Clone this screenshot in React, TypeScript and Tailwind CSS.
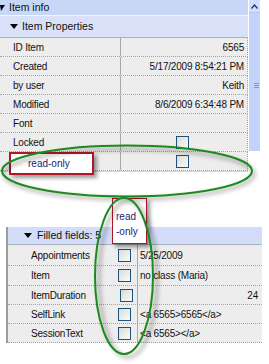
import React from 'react';

const font = { fontFamily: '"Liberation Sans", Arial, sans-serif' };

function Check({ className = '' }: { className?: string }) {
  return (
    <span
      className={`block w-[13px] h-[13px] border border-[#1c5180] bg-gradient-to-br from-[#dcdcd6] to-[#fafaf8] ${className}`}
    />
  );
}

function Tri({ className = '' }: { className?: string }) {
  return (
    <svg width="8" height="5" viewBox="0 0 8 5" className={className}>
      <path d="M0 0 L8 0 L4 5 Z" fill="#000" />
    </svg>
  );
}

const props: { label: string; value?: string; check?: boolean }[] = [
  { label: 'ID Item', value: '6565' },
  { label: 'Created', value: '5/17/2009 8:54:21 PM' },
  { label: 'by user', value: 'Keith' },
  { label: 'Modified', value: '8/6/2009 6:34:48 PM' },
  { label: 'Font' },
  { label: 'Locked', check: true },
];

const filled: { label: string; value: string; right?: boolean; h: string; mr: string }[] = [
  { label: 'Appointments', value: '5/25/2009', h: 'h-[21px]', mr: 'mr-[6px]' },
  { label: 'Item', value: 'no class (Maria)', h: 'h-[20px]', mr: 'mr-[6px]' },
  { label: 'ItemDuration', value: '24', right: true, h: 'h-[19px]', mr: 'mr-[4px]' },
  { label: 'SelfLink', value: '<a 6565>6565</a>', h: 'h-[19px]', mr: 'mr-[6px]' },
  { label: 'SessionText', value: '<a 6565></a>', h: 'h-[19px]', mr: 'mr-[6px]' },
];

export default function App() {
  return (
    <div className="relative w-[269px] h-[364px] overflow-hidden bg-white text-[#111]" style={font}>
      {/* item info panel */}
      <div className="flex">
        <div className="w-[248px]">
          <div className="h-[16px] flex items-center bg-[#c7d7f6] border-b border-[#f4f6fc] text-[10.5px]">
            <svg width="5" height="6" viewBox="0 0 5 6" className="ml-0 mr-[4px]">
              <path d="M0 0 L5 0 L1 6 Z" fill="#000" />
            </svg>
            Item info
          </div>
          <div className="h-[22px] flex items-center bg-[#d9e1f8] border-b border-[#a9b0bf] text-[10.5px]">
            <Tri className="ml-[10px] mr-[4px]" />
            Item Properties
          </div>
          {props.map((p) => (
            <div
              key={p.label}
              className="h-[19px] flex bg-[#ededed] border-b border-r border-dotted border-[#a4a4a4] text-[10px] tracking-[-0.2px]"
            >
              <div className="w-[121px] shrink-0 flex items-center pl-[13px] border-r border-solid border-r-[#a8a8a8]">
                {p.label}
              </div>
              <div className="flex-1 flex items-center justify-end pr-[3px]">
                {p.check ? <Check className="mr-[55px]" /> : p.value}
              </div>
            </div>
          ))}
        </div>
        <div className="w-[1px]" />
        <div className="w-[11px] h-[151px] bg-[#c3d3fb] flex flex-col items-center">
          <div className="w-full h-[13px] bg-[#d2defc] border-b border-[#b5c6ef] flex items-center justify-center">
            <svg width="7" height="5" viewBox="0 0 7 5">
              <path d="M0.5 4.5 L3.5 1 L6.5 4.5" stroke="#1d3b7a" strokeWidth="1.4" fill="none" />
            </svg>
          </div>
          <div className="mt-[70px] ml-[4px] flex flex-col gap-[1px]">
            <span className="block w-[5px] h-[1px] bg-[#7d98d6]" />
            <span className="block w-[5px] h-[1px] bg-[#7d98d6]" />
            <span className="block w-[5px] h-[1px] bg-[#7d98d6]" />
          </div>
        </div>
      </div>

      {/* read-only row */}
      <div className="w-[248px] h-[19px] flex bg-[#ededed] border-b border-r border-dotted border-[#a4a4a4] text-[10px]">
        <div className="w-[121px] shrink-0 border-r border-solid border-r-[#a8a8a8]" />
        <div className="flex-1 flex items-center">
          <Check className="ml-[55px]" />
        </div>
      </div>
      <div className="w-[248px] h-[1px] bg-[#c9d6f2]" />

      {/* filled fields panel */}
      <div className="mt-[55px] ml-[6px] w-[256px] border-l-2 border-[#9c9c9c] text-[10px] tracking-[-0.2px]">
        <div className="h-[18px] flex items-center bg-[#d3dcf8] border-b border-[#a9b0bf] text-[10.5px] tracking-normal">
          <Tri className="ml-[16px] mr-[5px]" />
          Filled fields: 5
        </div>
        {filled.map((f) => (
          <div key={f.label} className={`${f.h} flex bg-[#ededed] border-b border-dotted border-[#a4a4a4]`}>
            <div className="w-[130px] shrink-0 flex items-center pl-[23px] border-r border-solid border-r-[#a8a8a8]">
              <span className="flex-1">{f.label}</span>
              <Check className={f.mr} />
            </div>
            <div className={`flex-1 flex items-center ${f.right ? 'justify-end pr-[4px]' : 'pl-[2px]'}`}>
              {f.value}
            </div>
          </div>
        ))}
      </div>

      {/* annotations */}
      <div className="absolute left-[9px] top-[152px] w-[85px] h-[23px] bg-white border-2 border-[#b01828] shadow-[3px_3px_4px_rgba(0,0,0,0.4)] flex items-center pl-[17px] text-[10px] text-[#22226e]">
        read-only
      </div>
      <div className="absolute left-[112px] top-[198px] w-[35px] h-[46px] bg-white border-[1.5px] border-[#a8182a] shadow-[3px_3px_4px_rgba(0,0,0,0.4)] pl-[3px] pt-[10px] text-[10px] leading-[15px] text-[#22226e]">
        read
        <br />
        -only
      </div>
      <svg className="absolute left-0 top-0 pointer-events-none" width="269" height="364" viewBox="0 0 269 364">
        <defs>
          <filter id="sh" x="-20%" y="-20%" width="140%" height="140%">
            <feGaussianBlur stdDeviation="2" />
          </filter>
        </defs>
        <ellipse cx="129" cy="174" rx="125" ry="25" fill="none" stroke="#000" strokeOpacity="0.3" strokeWidth="3" filter="url(#sh)" />
        <ellipse cx="127" cy="171" rx="125" ry="25.5" fill="none" stroke="#1c8a1c" strokeWidth="2" />
        <ellipse cx="128" cy="279" rx="29" ry="78" fill="none" stroke="#000" strokeOpacity="0.3" strokeWidth="3" filter="url(#sh)" />
        <ellipse cx="124" cy="276" rx="29" ry="78" fill="none" stroke="#1c8a1c" strokeWidth="2" />
      </svg>
    </div>
  );
}
